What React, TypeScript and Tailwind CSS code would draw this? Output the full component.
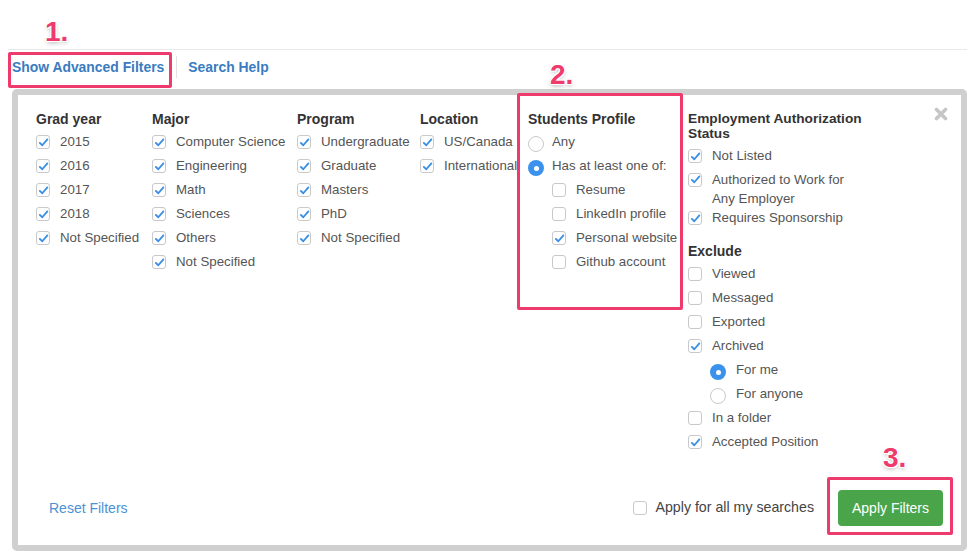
import React from 'react';

interface Option {
  label: string;
  checked?: boolean;
}

// Small checkbox with a blue tick
const CheckBox = ({ checked }: { checked?: boolean }) => (
  <span className="flex h-[14px] w-[14px] shrink-0 items-center justify-center rounded-[3px] border border-[#c9c9c9] bg-white">
    {checked && (
      <svg viewBox="0 0 12 12" className="h-[11px] w-[11px]">
        <path
          d="M2 6.4 L4.7 9 L10.2 2.6"
          fill="none"
          stroke="#3a8ee6"
          strokeWidth="2"
          strokeLinecap="round"
          strokeLinejoin="round"
        />
      </svg>
    )}
  </span>
);

const Radio = ({ checked }: { checked?: boolean }) =>
  checked ? (
    <span className="mt-[4px] flex h-[16px] w-[16px] shrink-0 items-center justify-center rounded-full bg-[#3b92ec]">
      <span className="h-[5px] w-[5px] rounded-full bg-white" />
    </span>
  ) : (
    <span className="mt-[4px] h-[16px] w-[16px] shrink-0 rounded-full border border-[#c9c9c9] bg-white" />
  );

const CheckRow = ({ label, checked }: Option) => (
  <div className="flex h-[24px] items-center gap-[10px] whitespace-nowrap">
    <CheckBox checked={checked} />
    <span>{label}</span>
  </div>
);

const Heading = ({ children }: { children: React.ReactNode }) => (
  <div className="mb-[2px] text-[14px] font-bold leading-[18px] text-[#333]">{children}</div>
);

const FilterColumn = ({ title, options, width }: { title: string; options: Option[]; width: string }) => (
  <div className={width}>
    <Heading>{title}</Heading>
    {options.map((o) => (
      <CheckRow key={o.label} label={o.label} checked={o.checked} />
    ))}
  </div>
);

const gradYears: Option[] = [
  { label: '2015', checked: true },
  { label: '2016', checked: true },
  { label: '2017', checked: true },
  { label: '2018', checked: true },
  { label: 'Not Specified', checked: true },
];

const majors: Option[] = [
  { label: 'Computer Science', checked: true },
  { label: 'Engineering', checked: true },
  { label: 'Math', checked: true },
  { label: 'Sciences', checked: true },
  { label: 'Others', checked: true },
  { label: 'Not Specified', checked: true },
];

const programs: Option[] = [
  { label: 'Undergraduate', checked: true },
  { label: 'Graduate', checked: true },
  { label: 'Masters', checked: true },
  { label: 'PhD', checked: true },
  { label: 'Not Specified', checked: true },
];

const locations: Option[] = [
  { label: 'US/Canada', checked: true },
  { label: 'International', checked: true },
];

const profileItems: Option[] = [
  { label: 'Resume' },
  { label: 'LinkedIn profile' },
  { label: 'Personal website', checked: true },
  { label: 'Github account' },
];

const App = () => {
  return (
    <div className="relative h-[558px] w-[975px] overflow-hidden bg-white font-['Liberation_Sans',Arial,sans-serif] text-[13.3px] text-[#555]">
      {/* top rule */}
      <div className="mx-[8px] h-[50px] border-b border-[#e9e9e9]" />

      {/* links */}
      <div className="flex h-[39px] items-center pb-[5px] pl-[12px] text-[13.9px] font-bold text-[#3a7cbf]">
        <span>Show Advanced Filters</span>
        <span className="ml-[12px] h-[22px] w-px bg-[#e2e2e2]" />
        <span className="ml-[11px]">Search Help</span>
      </div>

      {/* filter panel */}
      <div className="ml-[12px] mr-[8px] flex h-[462px] flex-col rounded-[5px] border-[6px] border-[#d0d0d0] bg-white">
        <div className="flex pl-[18px] pt-[15px]">
          <FilterColumn title="Grad year" options={gradYears} width="w-[116px]" />
          <FilterColumn title="Major" options={majors} width="w-[145px]" />
          <FilterColumn title="Program" options={programs} width="w-[123px]" />
          <FilterColumn title="Location" options={locations} width="w-[108px]" />

          {/* Students Profile */}
          <div className="w-[160px]">
            <Heading>Students Profile</Heading>
            <div className="flex h-[24px] items-center gap-[8px]">
              <Radio />
              <span>Any</span>
            </div>
            <div className="flex h-[24px] items-center gap-[8px] whitespace-nowrap">
              <Radio checked />
              <span>Has at least one of:</span>
            </div>
            <div className="pl-[24px]">
              {profileItems.map((o) => (
                <CheckRow key={o.label} label={o.label} checked={o.checked} />
              ))}
            </div>
          </div>

          {/* Employment + Exclude */}
          <div className="flex-1">
            <div className="mb-[3px] mt-[1px] text-[13.7px] font-bold leading-[15px] text-[#333]">
              Employment Authorization
              <br />
              Status
            </div>
            <CheckRow label="Not Listed" checked />
            <div className="flex h-[38px] items-start gap-[10px] pt-[2px]">
              <span className="mt-[2.5px]">
                <CheckBox checked />
              </span>
              <span className="leading-[19px]">
                Authorized to Work for
                <br />
                Any Employer
              </span>
            </div>
            <CheckRow label="Requires Sponsorship" checked />

            <div className="mt-[12px]">
              <Heading>Exclude</Heading>
            </div>
            <CheckRow label="Viewed" />
            <CheckRow label="Messaged" />
            <CheckRow label="Exported" />
            <CheckRow label="Archived" checked />
            <div className="pl-[22px]">
              <div className="flex h-[24px] items-center gap-[10px]">
                <Radio checked />
                <span>For me</span>
              </div>
              <div className="flex h-[24px] items-center gap-[10px]">
                <Radio />
                <span>For anyone</span>
              </div>
            </div>
            <CheckRow label="In a folder" />
            <CheckRow label="Accepted Position" checked />
          </div>

          {/* close */}
          <svg viewBox="0 0 14 14" className="mr-[13px] mt-[-3px] h-[14px] w-[14px] shrink-0">
            <path d="M2.5 2.5 L11.5 11.5 M11.5 2.5 L2.5 11.5" stroke="#c6c6c6" strokeWidth="3.6" strokeLinecap="round" />
          </svg>
        </div>

        {/* footer */}
        <div className="mt-auto flex items-center pb-[19px] pl-[31px] pr-[18px]">
          <span className="text-[14px] text-[#4b92d6]">Reset Filters</span>
          <div className="ml-auto flex items-center gap-[9px]">
            <CheckBox />
            <span className="text-[14.2px] text-[#444]">Apply for all my searches</span>
          </div>
          <button className="ml-[24px] h-[36px] w-[105px] rounded-[4px] bg-[#4aa54a] text-[14px] text-white">
            Apply Filters
          </button>
        </div>
      </div>

      {/* annotations */}
      <div className="absolute left-[45px] top-[18px] text-[28px] font-bold leading-[28px] text-[#ee3a6d] [text-shadow:1px_1px_0_#fff,-1px_-1px_0_#fff,1px_-1px_0_#fff,-1px_1px_0_#fff,0_2px_4px_rgba(0,0,0,0.3)]">
        1.
      </div>
      <div className="absolute left-[8px] top-[52px] h-[36px] w-[164px] rounded-[2px] border-[3px] border-[#ee3a6d]" />

      <div className="absolute left-[550px] top-[61px] text-[28px] font-bold leading-[28px] text-[#ee3a6d] [text-shadow:1px_1px_0_#fff,-1px_-1px_0_#fff,1px_-1px_0_#fff,-1px_1px_0_#fff,0_2px_4px_rgba(0,0,0,0.3)]">
        2.
      </div>
      <div className="absolute left-[517px] top-[93px] h-[217px] w-[166px] rounded-[2px] border-[3px] border-[#ee3a6d]" />

      <div className="absolute left-[883px] top-[444px] text-[28px] font-bold leading-[28px] text-[#ee3a6d] [text-shadow:1px_1px_0_#fff,-1px_-1px_0_#fff,1px_-1px_0_#fff,-1px_1px_0_#fff,0_2px_4px_rgba(0,0,0,0.3)]">
        3.
      </div>
      <div className="absolute left-[827px] top-[477px] h-[58px] w-[126px] rounded-[2px] border-[3px] border-[#ee3a6d]" />
    </div>
  );
};

export default App;
